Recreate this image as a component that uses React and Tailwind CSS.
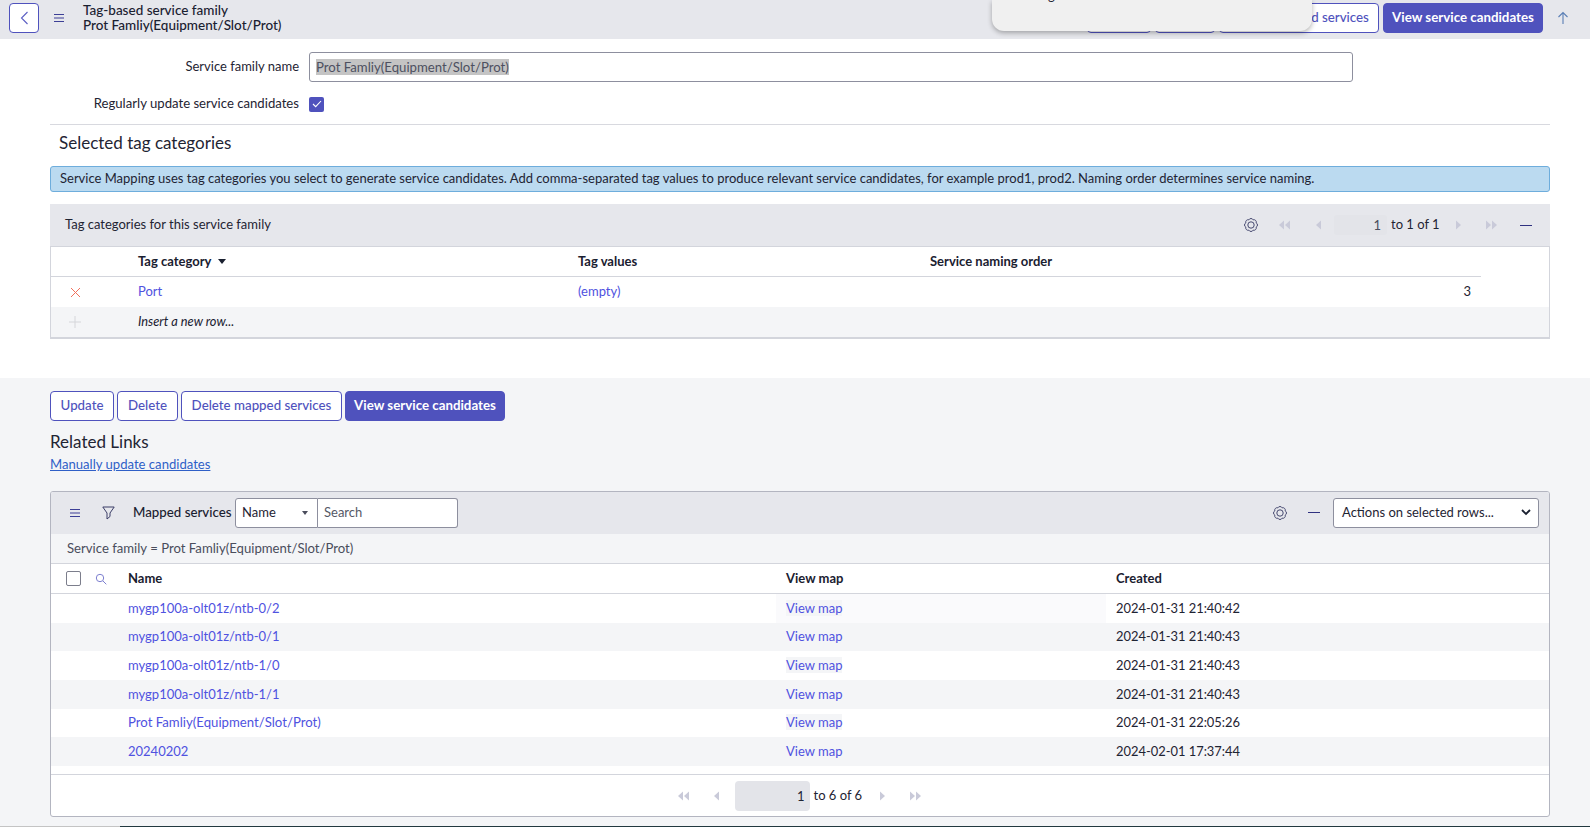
import React from "react";

function Btn({ children, primary, className = "" }) {
  return (
    <button
      className={
        "h-[30px] rounded-[4px] border border-[#4f52bd] text-[13.3px] whitespace-nowrap " +
        (primary ? "bg-[#4f52bd] text-white font-bold " : "bg-white text-[#4f52bd] font-[500] ") +
        className
      }
    >
      {children}
    </button>
  );
}

function Hamburger() {
  return (
    <svg width="12" height="10" viewBox="0 0 12 10" fill="none" stroke="#3c3f96" strokeWidth="1.2">
      <path d="M1 1.5h10M1 5h10M1 8.5h10" />
    </svg>
  );
}

function Gear() {
  return (
    <svg width="14" height="14" viewBox="0 0 14 14" fill="none" stroke="#45486f" strokeWidth="1">
      <path d="M12.17 4.86A2.4 2.4 0 0 1 12.17 9.14A2.4 2.4 0 0 1 9.14 12.17A2.4 2.4 0 0 1 4.86 12.17A2.4 2.4 0 0 1 1.83 9.14A2.4 2.4 0 0 1 1.83 4.86A2.4 2.4 0 0 1 4.86 1.83A2.4 2.4 0 0 1 9.14 1.83A2.4 2.4 0 0 1 12.17 4.86Z" />
      <circle cx="7" cy="7" r="3.2" />
    </svg>
  );
}

function Tri({ dir, double }) {
  const one = dir === "l" ? "M6 0.5v9L1 5z" : "M1 0.5v9L6 5z";
  const two = dir === "l" ? "M12 0.5v9L7 5z" : "M7 0.5v9L12 5z";
  return (
    <svg width={double ? 13 : 7} height="10" viewBox={double ? "0 0 13 10" : "0 0 7 10"} fill="#c9cad9">
      <path d={one} />
      {double && <path d={two} />}
    </svg>
  );
}

function Minus() {
  return <div className="w-[12px] h-px bg-[#2f3180]" />;
}

const rows = [
  ["mygp100a-olt01z/ntb-0/2", "2024-01-31 21:40:42"],
  ["mygp100a-olt01z/ntb-0/1", "2024-01-31 21:40:43"],
  ["mygp100a-olt01z/ntb-1/0", "2024-01-31 21:40:43"],
  ["mygp100a-olt01z/ntb-1/1", "2024-01-31 21:40:43"],
  ["Prot Famliy(Equipment/Slot/Prot)", "2024-01-31 22:05:26"],
  ["20240202", "2024-02-01 17:37:44"],
];

export default function App() {
  return (
    <div className="relative w-[1590px] h-[827px] overflow-hidden bg-white text-[13px] text-[#1f2433] font-['Lato','Liberation_Sans',sans-serif]">
      {/* top header */}
      <header className="h-[39px] bg-[#e6e7ec] flex items-start pt-[3px] pl-[9px] pr-[21px]">
        <button className="w-[30px] h-[30px] rounded-[4px] border border-[#4f52bd] bg-white flex items-center justify-center">
          <svg width="9" height="14" viewBox="0 0 9 14" fill="none" stroke="#5b5ec4" strokeWidth="1.1">
            <path d="M7.5 1L1.5 7l6 6" />
          </svg>
        </button>
        <div className="ml-[14px] w-[30px] h-[30px] flex items-center">
          <Hamburger />
        </div>
        <div className="leading-[15px] text-[13.5px] text-[#1a2030] font-[500] mt-[-0.5px]">
          <div>Tag-based service family</div>
          <div>Prot Famliy(Equipment/Slot/Prot)</div>
        </div>
        <div className="ml-auto flex items-center gap-[4px] h-[30px]">
          <Btn className="w-[64px]">Update</Btn>
          <Btn className="w-[60px]">Delete</Btn>
          <Btn className="w-[160px]">Delete mapped services</Btn>
          <Btn primary className="w-[160px]">View service candidates</Btn>
          <svg className="ml-[10px]" width="12" height="14" viewBox="0 0 12 14" fill="none" stroke="#5a7fb5" strokeWidth="1.1">
            <path d="M6 13V1.5M1.5 6L6 1.5 10.5 6" />
          </svg>
        </div>
      </header>

      {/* popup sliver over the header */}
      <div className="absolute left-[992px] top-0 w-[320px] h-[31px] bg-[#f0f0f0] rounded-b-[12px] shadow-[0_2px_5px_rgba(0,0,0,0.3)] overflow-hidden">
        <span className="absolute left-[56px] top-[-13px] text-[13px] leading-[16px]">g</span>
      </div>

      {/* form section */}
      <section className="h-[339px] pl-[50px] pr-[40px] pt-[13px]">
        <div className="flex items-center h-[30px]">
          <label className="w-[249px] text-right">Service family name</label>
          <div className="ml-[10px] w-[1044px] h-[30px] border border-[#8d8f9e] rounded-[3px] flex items-center pl-[6px]">
            <span className="bg-[#c4c4c4] text-[#4d5060] leading-[16px] text-[13.2px]">Prot Famliy(Equipment/Slot/Prot)</span>
          </div>
        </div>
        <div className="flex items-center mt-[14px] h-[16px]">
          <label className="w-[249px] text-right text-[13.15px]">Regularly update service candidates</label>
          <div className="ml-[10px] w-[15px] h-[15px] rounded-[2px] bg-[#4f52bd] flex items-center justify-center">
            <svg width="10" height="8" viewBox="0 0 10 8" fill="none" stroke="#fff" strokeWidth="1.1">
              <path d="M1 4l2.7 2.7L9 1" />
            </svg>
          </div>
        </div>
        <div className="mt-[12px] h-px bg-[#d8d9df]" />
        <h2 className="mt-[6px] pl-[9px] text-[17px] leading-[24px] font-normal">Selected tag categories</h2>
        <div className="mt-[11px] h-[26px] rounded-[3px] border border-[#6eaddc] bg-[#bbdaf0] flex items-center pl-[9px] whitespace-nowrap">
          Service Mapping uses tag categories you select to generate service candidates. Add comma-separated tag values to produce relevant service candidates, for example prod1, prod2. Naming order determines service naming.
        </div>

        {/* tag categories panel */}
        <div className="mt-[12px] border-b-2 border-[#d3d5dc]">
          <div className="h-[43px] bg-[#e6e7ec] border-b border-[#d3d5dc] flex items-center pl-[15px]">
            <span>Tag categories for this service family</span>
            <div className="ml-auto flex items-center">
              <Gear />
              <div className="ml-[20px]"><Tri dir="l" double /></div>
              <div className="ml-[24px]"><Tri dir="l" /></div>
              <div className="ml-[12px] w-[53px] h-[20px] rounded-[3px] bg-[#e3e4e9] text-right pr-[6px] leading-[20px] text-[#4a4d5c]">1</div>
              <span className="ml-[4px] w-[48px] whitespace-nowrap">to 1 of 1</span>
              <div className="ml-[16px]"><Tri dir="r" /></div>
              <div className="ml-[23px]"><Tri dir="r" double /></div>
              <div className="ml-[22px] mr-[18px]"><Minus /></div>
            </div>
          </div>
          <div className="border-x border-[#d3d5dc]">
            <div className="w-[1430px] h-[30px] border-b border-[#d3d5dc] flex items-center font-bold text-[#1a2030]">
              <div className="w-[87px]" />
              <div className="w-[440px] flex items-center gap-[7px]">
                Tag category
                <svg width="8" height="5" viewBox="0 0 8 5" fill="#1a2030"><path d="M0 0h8L4 5z" /></svg>
              </div>
              <div className="w-[352px]">Tag values</div>
              <div>Service naming order</div>
            </div>
            <div className="w-[1430px] h-[30px] flex items-center">
              <div className="w-[87px] pl-[19px]">
                <svg width="11" height="11" viewBox="0 0 11 11" fill="none" stroke="#f2705c" strokeWidth="1"><path d="M1 1l9 9M10 1l-9 9" /></svg>
              </div>
              <a className="w-[440px] text-[#4f52e0]">Port</a>
              <a className="w-[352px] text-[#4f52e0]">(empty)</a>
              <div className="flex-1 text-right pr-[10px]">3</div>
            </div>
            <div className="h-[30px] bg-[#f4f5f7] flex items-center">
              <div className="w-[87px] pl-[18px]">
                <svg width="12" height="12" viewBox="0 0 12 12" fill="none" stroke="#d5d6da" strokeWidth="1"><path d="M6 0v12M0 6h12" /></svg>
              </div>
              <i className="text-[#1a2030] text-[12.8px]">Insert a new row...</i>
            </div>
          </div>
        </div>
      </section>

      {/* lower section */}
      <section className="h-[449px] bg-[#f4f5f7] pl-[50px] pr-[40px] pt-[13px]">
        <div className="flex gap-[3px]">
          <Btn className="w-[64px]">Update</Btn>
          <Btn className="w-[61px]">Delete</Btn>
          <Btn className="w-[161px]">Delete mapped services</Btn>
          <Btn primary className="w-[160px]">View service candidates</Btn>
        </div>
        <div className="mt-[9px] text-[17px] leading-[24px]">Related Links</div>
        <a className="block leading-[20px] text-[#2f5fc7] underline text-[13.1px]">Manually update candidates</a>

        <div className="mt-[17px] h-[326px] rounded-[3px] border border-[#b3b5c0] bg-white overflow-hidden">
          <div className="h-[42px] bg-[#e6e7ec] flex items-center pl-[18px] pb-px">
            <Hamburger />
            <svg className="ml-[21px]" width="13" height="14" viewBox="0 0 13 14" fill="none" stroke="#3a3d66" strokeWidth="1"><path d="M.8 1h11.4L8 7v3.5L5 13V7z" /></svg>
            <span className="ml-[18px] w-[98px] whitespace-nowrap text-[13.3px] font-[500] text-[#1a2030]">Mapped services</span>
            <div className="ml-[4px] w-[83px] h-[30px] bg-white border border-[#8d8f9e] rounded-l-[3px] flex items-center pl-[6px]">
              Name
              <svg className="ml-auto mr-[9px]" width="6" height="4" viewBox="0 0 6 4" fill="#4a4d5c"><path d="M0 0h6L3 4z" /></svg>
            </div>
            <div className="w-[140px] h-[30px] bg-white border border-[#8d8f9e] border-l-0 rounded-r-[3px] flex items-center pl-[6px] text-[#555866]">Search</div>
            <div className="ml-auto flex items-center">
              <Gear />
              <div className="ml-[21px]"><Minus /></div>
              <div className="ml-[13px] mr-[10px] w-[206px] h-[30px] bg-white border border-[#8d8f9e] rounded-[3px] flex items-center pl-[8px]">
                Actions on selected rows...
                <svg className="ml-auto mr-[7px]" width="10" height="7" viewBox="0 0 10 7" fill="none" stroke="#1a2030" strokeWidth="1.8"><path d="M1 1l4 4 4-4" /></svg>
              </div>
            </div>
          </div>
          <div className="h-[30px] bg-[#f4f5f7] border-b border-[#d3d5dc] flex items-center pl-[16px] text-[#4a4d5c] text-[13.15px]">
            Service family = Prot Famliy(Equipment/Slot/Prot)
          </div>
          <div className="h-[30px] border-b border-[#d3d5dc] flex items-center font-bold text-[#1a2030]">
            <div className="w-[77px] flex items-center pl-[15px]">
              <div className="w-[15px] h-[15px] rounded-[2px] border border-[#7c7e8c] bg-white" />
              <svg className="ml-[14px]" width="12" height="12" viewBox="0 0 12 12" fill="none" stroke="#7d7fd0" strokeWidth="1"><circle cx="5" cy="5" r="3.7" /><path d="M8 8l3.3 3.3" /></svg>
            </div>
            <div className="w-[658px]">Name</div>
            <div className="w-[330px]">View map</div>
            <div>Created</div>
          </div>
          {rows.map(([name, created], i) => (
            <div key={name} className={"h-[28.67px] flex items-center " + (i % 2 ? "bg-[#f4f5f7]" : "bg-white")}>
              <a className={"w-[648px] ml-[77px] text-[#4f52e0] " + (i === 4 ? "text-[13.2px]" : "")}>{name}</a>
              <div className={"w-[330px] h-full flex items-center pl-[10px] " + (i === 0 ? "bg-[#fafafc]" : "")}>
                <div>
                  <a className={"text-[#4f52e0] " + (i % 2 ? "" : "bg-[#f4f5f7]")}>View map</a>
                </div>
              </div>
              <div className="ml-[10px] text-[12.9px]">{created}</div>
            </div>
          ))}
          <div className="mt-[8px] h-[43px] border-t border-[#d3d5dc] flex items-center justify-center">
            <div className="flex items-center pr-[2px]">
              <Tri dir="l" double />
              <div className="ml-[23px]"><Tri dir="l" /></div>
              <div className="ml-[15px] w-[75px] h-[30px] rounded-[4px] bg-[#e3e4e9] text-right pr-[5px] leading-[30px]">1</div>
              <span className="ml-[4px] w-[49px] whitespace-nowrap">to 6 of 6</span>
              <div className="ml-[16px]"><Tri dir="r" /></div>
              <div className="ml-[23px]"><Tri dir="r" double /></div>
            </div>
          </div>
        </div>
      </section>

      {/* window bottom edge */}
      <div className="absolute left-0 bottom-0 w-full h-px flex">
        <div className="w-[120px] bg-[#c4c4c4]" />
        <div className="flex-1 bg-[#22383f]" />
      </div>
    </div>
  );
}
